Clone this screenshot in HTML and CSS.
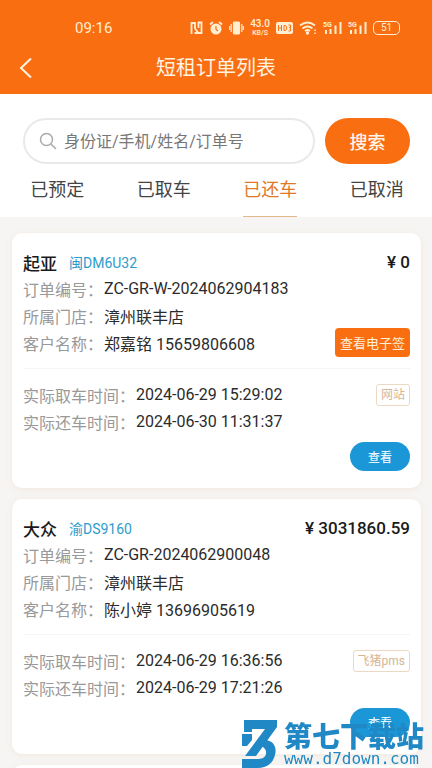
FILE: index.html
```html
<!DOCTYPE html>
<html lang="zh-CN">
<head>
<meta charset="utf-8">
<meta name="viewport" content="width=device-width, initial-scale=1">
<title>短租订单列表</title>
<link rel="stylesheet" href="styles.css">
</head>
<body>
<div class="app">
  <header class="header">
    <div class="status">
      <time class="clock">09:16</time>
      <div class="status-icons">
        <svg width="13" height="14" viewBox="0 0 13 14" fill="none" stroke="currentColor" stroke-width="1.800"><path d="M1.500 13V2H5V7.500L8 11.500M4.500 12H11.500V1.500H8.500V7"/></svg>
        <svg width="14" height="14" viewBox="0 0 14 14"><circle cx="7" cy="8" r="5.500" fill="currentColor"/><path d="M1 3.500 4 1M13 3.500 10 1" stroke="currentColor" stroke-width="1.800"/><path d="M7 5V8.500L9 10" fill="none" stroke="#fa6e12" stroke-width="1.200"/></svg>
        <svg width="15" height="14" viewBox="0 0 15 14" stroke="currentColor" stroke-width="1.200"><rect x="4.500" y="1" width="6" height="12" rx="1" fill="currentColor"/><path d="M2.200 3V11M.7 5V9M12.800 3V11M14.300 5V9"/></svg>
        <span class="speed"><span>43.0</span><span class="unit">KB/S</span></span>
        <svg width="17" height="12" viewBox="0 0 17 12"><rect width="17" height="12" rx="2" fill="currentColor"/><path d="M2.500 3V9M5.500 3V9M2.500 6H5.500M8 3.500V8.500H9C11.200 8.500 11.200 3.500 9 3.500ZM12.500 3H14.500V5.500H13M14.500 5.500V9H12.500" fill="none" stroke="#fa6e12"/></svg>
        <svg class="wifi" width="18" height="14" viewBox="0 0 18 14" fill="none" stroke="currentColor" stroke-width="1.700"><path d="M1 4.500Q8.500-1.500 16 4.500M3.500 7.500Q8.500 3.500 13.500 7.500M6 10Q8.500 8 11 10"/><circle cx="8.500" cy="12" r=".8" fill="currentColor"/><path d="M16 8.500V10M16 11.500V13" stroke-width="1.400"/></svg>
        <svg class="signal" width="19" height="14" viewBox="0 0 19 14"><text class="net" x="0" y="6">5G</text><path d="M3 9V13M7.500 8V13M12.500 4.500V13M17.500 1V13" stroke="currentColor" stroke-width="2"/></svg>
        <svg class="signal" width="19" height="14" viewBox="0 0 19 14"><text class="net" x="0" y="6">5G</text><path d="M3 9V13M7.500 8V13M12.500 4.500V13M17.500 1V13" stroke="currentColor" stroke-width="2"/></svg>
        <span class="battery">51</span>
      </div>
    </div>
    <div class="titlebar">
      <button class="back" type="button" aria-label="返回"><svg width="14" height="22" viewBox="0 0 14 22" fill="none" stroke="currentColor" stroke-width="2"><path d="M12 1.500 2 11 12 20.500"/></svg></button>
      <h1>短租订单列表</h1>
    </div>
  </header>

  <section class="filters">
    <form class="search">
      <label class="search-box">
        <svg width="18" height="18" viewBox="0 0 18 18" fill="none" stroke="#aaa" stroke-width="1.500"><circle cx="7.500" cy="7.500" r="6"/><path d="M12 12 17 17"/></svg>
        <input type="text" aria-label="搜索订单" placeholder="身份证/手机/姓名/订单号">
      </label>
      <button class="search-btn" type="button">搜索</button>
    </form>
    <nav class="tabs">
      <a href="#">已预定</a>
      <a href="#">已取车</a>
      <a href="#" class="active" aria-current="page">已还车</a>
      <a href="#">已取消</a>
    </nav>
  </section>

  <main class="list">
    <article class="card">
      <div class="head"><h2>起亚</h2><span class="plate">闽DM6U32</span><span class="price">¥ 0</span></div>
      <div class="row"><span class="key">订单编号：</span><span>ZC-GR-W-2024062904183</span></div>
      <div class="row"><span class="key">所属门店：</span><span>漳州联丰店</span></div>
      <div class="row"><span class="key">客户名称：</span><span>郑嘉铭 15659806608</span><button class="sign" type="button">查看电子签</button></div>
      <div class="times">
        <div class="row"><span class="key long">实际取车时间：</span><span>2024-06-29 15:29:02</span><span class="source">网站</span></div>
        <div class="row"><span class="key long">实际还车时间：</span><span>2024-06-30 11:31:37</span></div>
      </div>
      <button class="view" type="button">查看</button>
    </article>
    <article class="card">
      <div class="head"><h2>大众</h2><span class="plate">渝DS9160</span><span class="price">¥ 3031860.59</span></div>
      <div class="row"><span class="key">订单编号：</span><span>ZC-GR-2024062900048</span></div>
      <div class="row"><span class="key">所属门店：</span><span>漳州联丰店</span></div>
      <div class="row"><span class="key">客户名称：</span><span>陈小婷 13696905619</span></div>
      <div class="times">
        <div class="row"><span class="key long">实际取车时间：</span><span>2024-06-29 16:36:56</span><span class="source">飞猪pms</span></div>
        <div class="row"><span class="key long">实际还车时间：</span><span>2024-06-29 17:21:26</span></div>
      </div>
      <button class="view" type="button">查看</button>
    </article>
    <article class="card"></article>
  </main>

  <aside class="watermark">
    <svg width="36" height="48" viewBox="0 0 36 48" fill="#2088c4"><path d="M2 0H35V7L14 36H3L23 9H10V12H2Z"/><path d="M0 14H10V20L5 26H0ZM0 39H16C23 39 26 34 23 29L20 26L24 20C32 21 35 28 33 35C31 43 25 48 16 48H0Z"/></svg>
    <div class="brand"><strong>第七下载站</strong><span>www.d7down.com</span></div>
  </aside>
</div>
</body>
</html>
```
FILE: styles.css
```css
* { box-sizing: border-box; }

body {
  margin: 0;
  font-family: Roboto, "Noto Sans CJK SC", sans-serif;
  font-size: 16px;
  color: #2b2b2b;
  background: #f6f5f4;
}

button, input { font: inherit; border: 0; padding: 0; }
h1, h2 { margin: 0; font-weight: 400; }

.app {
  height: 100vh;
  display: flex;
  flex-direction: column;
}

.header {
  background: #fa6e12;
  color: #ffeed2;
  padding: 14px 0 6px;
}

.status {
  display: flex;
  align-items: center;
  justify-content: space-between;
  height: 27px;
  padding: 0 32px 0 75px;
}

.clock { font-size: 15px; }

.status-icons {
  display: flex;
  align-items: center;
  gap: 6px;
}

.speed {
  display: flex;
  flex-direction: column;
  align-items: center;
  font-size: 10px;
  font-weight: 500;
  line-height: 10px;
}

.unit { font-size: 7px; line-height: 8px; }
.net { font-size: 7px; font-weight: 700; fill: currentColor; }

.battery {
  width: 27px;
  height: 14px;
  border: 1px solid;
  border-radius: 5px;
  font-size: 10px;
  line-height: 12px;
  text-align: center;
}

.titlebar {
  display: grid;
  grid-template-columns: 52px 1fr 52px;
  align-items: center;
  height: 47px;
  padding-top: 6px;
}

.titlebar h1 {
  text-align: center;
  font-size: 20px;
  line-height: 30px;
  color: #fff3e2;
}

.back {
  display: flex;
  justify-content: center;
  background: none;
  color: #fff3e2;
}

.filters {
  background: #fff;
  padding-top: 24px;
}

.search {
  display: flex;
  gap: 10px;
  padding: 0 22px 0 23px;
}

.search-box {
  flex: 1;
  display: flex;
  align-items: center;
  gap: 7px;
  height: 46px;
  padding: 0 14px;
  border: 2px solid #e9e9e9;
  border-radius: 23px;
}

.search-box input {
  flex: 1;
  min-width: 0;
  background: none;
  outline: 0;
}

.search-box input::placeholder { color: #777; opacity: 1; }

.search-btn {
  width: 85px;
  height: 46px;
  border-radius: 23px;
  background: #fa6e12;
  color: #fff6e8;
  font-size: 18px;
  font-weight: 500;
}

.tabs {
  display: grid;
  grid-template-columns: repeat(4, 1fr);
  justify-items: center;
  padding: 0 2px 0 4px;
}

.tabs a {
  height: 53px;
  padding-top: 12px;
  border-bottom: 1px solid transparent;
  font-size: 18px;
  line-height: 28px;
  color: #444;
  text-decoration: none;
}

.tabs .active { color: #e07828; border-color: #e3b98c; }

.list {
  flex: 1;
  min-height: 0;
  overflow: hidden;
  display: flex;
  flex-direction: column;
  gap: 11px;
  padding: 16px 11px 0 12px;
}

.card {
  flex: none;
  display: flex;
  flex-direction: column;
  padding: 16px 11px 17px;
  border-radius: 10px;
  background: #fff;
  box-shadow: 0 1px 6px #f3e6da;
}

.head, .row { display: flex; align-items: center; }
.head { height: 26px; }
.row { height: 27px; }

.head h2 { font-size: 17px; font-weight: 500; color: #1a1a1a; }
.plate { margin-left: 12px; font-size: 14px; color: #2e9ccb; }
.price { margin-left: auto; font-size: 17px; font-weight: 500; color: #1a1a1a; }

.key { width: 81px; color: #999; white-space: nowrap; }
.key.long { width: 113px; }

.sign {
  margin-left: auto;
  width: 75px;
  height: 29px;
  border-radius: 4px;
  background: #fa6e12;
  color: #ffeed8;
  font-size: 13px;
  white-space: nowrap;
}

.times {
  margin-top: 12px;
  padding-top: 12px;
  border-top: 1px solid #f5f5f5;
}

.source {
  margin-left: auto;
  padding: 0 4px;
  border: 1px solid #ecd9c4;
  border-radius: 3px;
  font-size: 12px;
  line-height: 20px;
  color: #d6b593;
}

.view {
  align-self: flex-end;
  width: 60px;
  height: 29px;
  margin-top: 7px;
  border-radius: 15px;
  background: #1b96d6;
  color: #e6f6ff;
  font-size: 12px;
  font-weight: 500;
}

.watermark {
  position: fixed;
  right: 8px;
  bottom: 0;
  display: flex;
  align-items: flex-end;
  gap: 6px;
  color: #2088c4;
}

.brand { display: flex; flex-direction: column; }
.brand strong { font-family: "Noto Sans CJK SC", sans-serif; font-size: 28px; font-weight: 900; line-height: 30px; }
.brand span { font-family: "DejaVu Sans Mono", monospace; font-size: 16px; line-height: 18px; }
```
